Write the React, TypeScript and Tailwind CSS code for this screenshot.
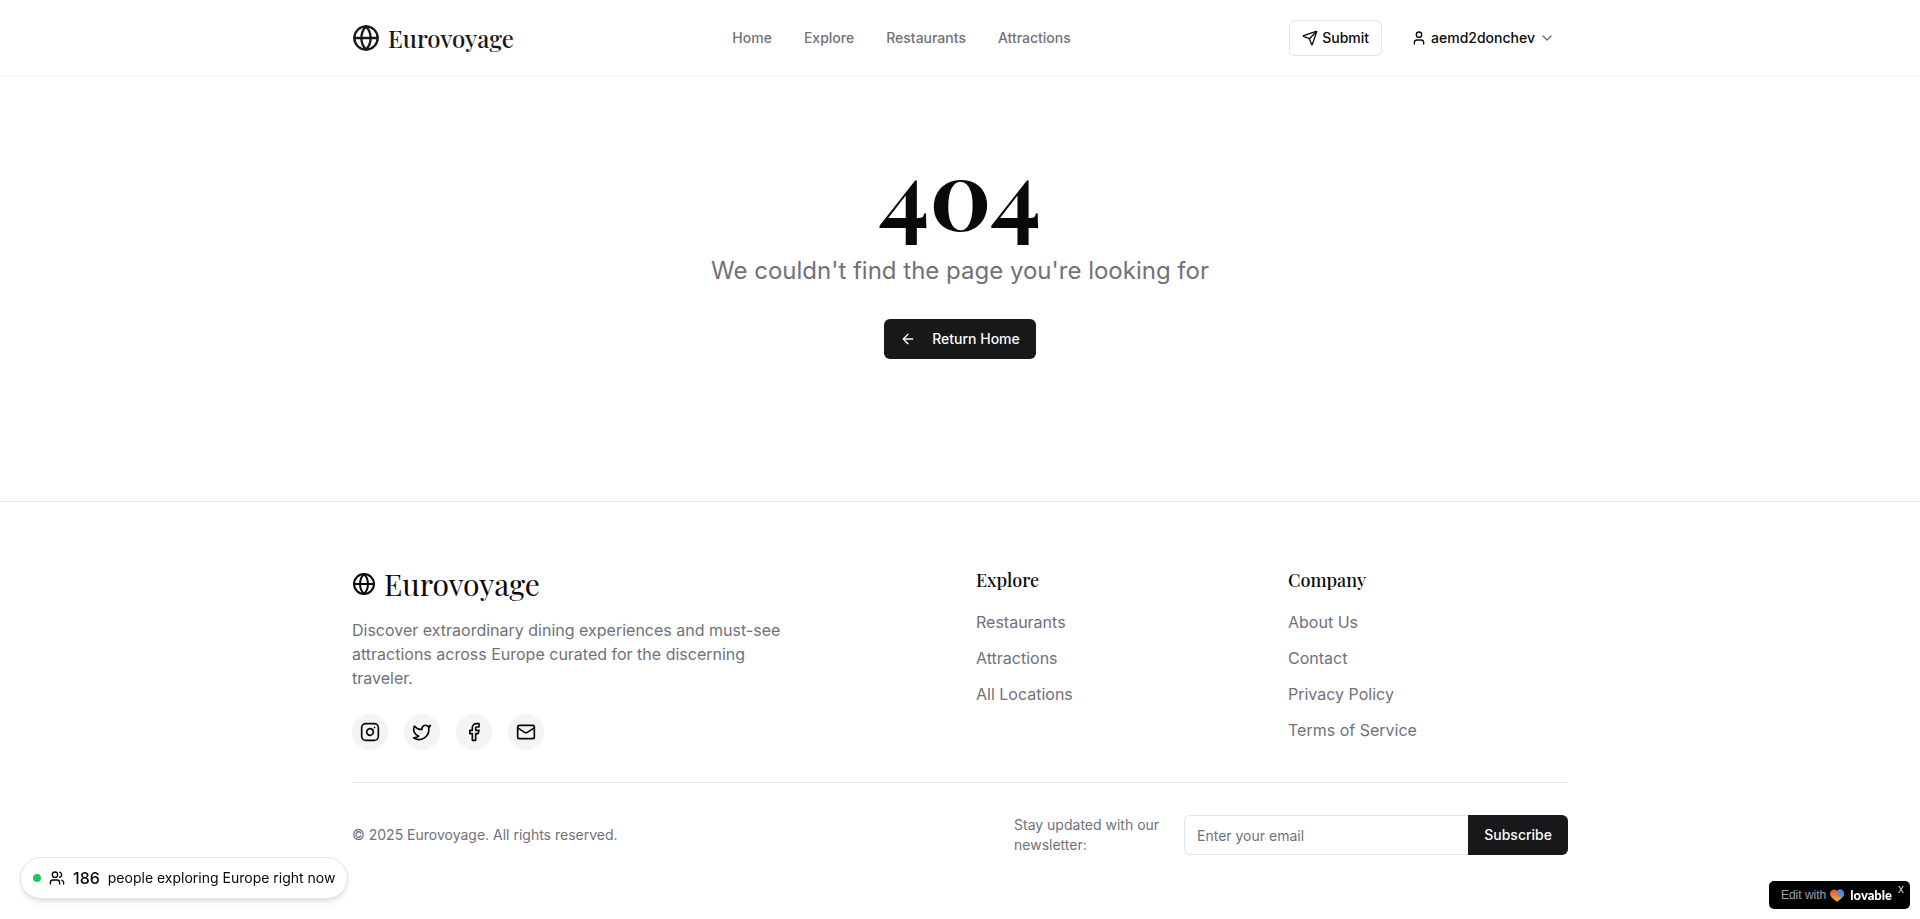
import React from 'react';
import {
  ArrowLeft,
  ChevronDown,
  Facebook,
  Globe,
  Instagram,
  Mail,
  Send,
  Twitter,
  User,
  Users,
} from 'lucide-react';

const serif = "font-['Playfair_Display','Liberation_Serif',serif]";

const navLinks = ['Home', 'Explore', 'Restaurants', 'Attractions'];

const footerColumns = [
  { title: 'Explore', links: ['Restaurants', 'Attractions', 'All Locations'] },
  { title: 'Company', links: ['About Us', 'Contact', 'Privacy Policy', 'Terms of Service'] },
];

const socials = [
  { name: 'Instagram', Icon: Instagram },
  { name: 'Twitter', Icon: Twitter },
  { name: 'Facebook', Icon: Facebook },
  { name: 'Email', Icon: Mail },
];

function Header() {
  return (
    <header className="border-b border-[#f4f4f5]">
      <div className="mx-auto flex h-19 max-w-7xl items-center justify-between px-8">
        <a href="#" className="flex items-center gap-2 text-[#18181b]">
          <Globe className="size-7" />
          <span className={`text-2xl font-medium ${serif}`}>Eurovoyage</span>
        </a>
        <nav className="flex items-center gap-8">
          {navLinks.map((label) => (
            <a key={label} href="#" className="text-sm font-medium text-[#71717a]">
              {label}
            </a>
          ))}
        </nav>
        <div className="flex items-center gap-4">
          <button className="flex h-9 items-center gap-1 rounded-md border border-[#e4e4e7] px-3 text-sm font-medium">
            <Send className="size-4" />
            Submit
          </button>
          <button className="flex h-9 items-center gap-1 border border-transparent px-3 text-sm font-medium">
            <User className="size-4" />
            aemd2donchev
            <ChevronDown className="size-4 opacity-60" />
          </button>
        </div>
      </div>
    </header>
  );
}

function NotFound() {
  return (
    <main className="flex flex-col items-center px-8 pt-[66px] pb-[142px] text-center">
      <h1 className={`mb-4 text-8xl font-bold ${serif}`}>404</h1>
      <p className="text-2xl text-[#71717a]">We couldn't find the page you're looking for</p>
      <a
        href="#"
        className="mt-8 flex h-10 items-center gap-4 rounded-md bg-[#18181b] px-4 text-sm font-medium text-[#fafafa]"
      >
        <ArrowLeft className="size-4" />
        Return Home
      </a>
    </main>
  );
}

function Footer() {
  return (
    <footer className="border-t border-[#e4e4e7]">
      <div className="mx-auto max-w-7xl px-8 py-16">
        <div className="grid grid-cols-4 gap-8">
          <div className="col-span-2">
            <a href="#" className="flex items-center gap-2 text-[#09090b]">
              <Globe className="size-6" />
              <span className={`text-3xl ${serif}`}>Eurovoyage</span>
            </a>
            <p className="mt-4 max-w-md text-[#71717a]">
              Discover extraordinary dining experiences and must-see attractions across Europe
              curated for the discerning traveler.
            </p>
            <div className="mt-6 flex gap-4">
              {socials.map(({ name, Icon }) => (
                <a
                  key={name}
                  href="#"
                  aria-label={name}
                  className="flex size-9 items-center justify-center rounded-full bg-[#f4f4f5]"
                >
                  <Icon className="size-5" />
                </a>
              ))}
            </div>
          </div>
          {footerColumns.map(({ title, links }) => (
            <div key={title}>
              <h2 className={`text-lg font-medium ${serif}`}>{title}</h2>
              <ul className="mt-4 space-y-3">
                {links.map((label) => (
                  <li key={label}>
                    <a href="#" className="text-[#71717a]">
                      {label}
                    </a>
                  </li>
                ))}
              </ul>
            </div>
          ))}
        </div>
        <div className="mt-8 flex items-center justify-between border-t border-[#e4e4e7] pt-8 text-sm">
          <p className="text-[#71717a]">© 2025 Eurovoyage. All rights reserved.</p>
          <div className="flex items-center gap-4">
            <label htmlFor="email" className="w-[154px] text-[#71717a]">
              Stay updated with our newsletter:
            </label>
            <form className="flex h-10 w-96" onSubmit={(e) => e.preventDefault()}>
              <input
                id="email"
                type="email"
                placeholder="Enter your email"
                className="min-w-0 flex-1 rounded-l-md border border-r-0 border-[#e4e4e7] px-3 pt-2.5 pb-2 placeholder:text-[#71717a]"
              />
              <button className="rounded-r-md bg-[#18181b] px-4 font-medium text-[#fafafa]">
                Subscribe
              </button>
            </form>
          </div>
        </div>
      </div>
    </footer>
  );
}

function VisitorCount() {
  return (
    <div className="fixed bottom-5 left-5 flex items-center gap-2 rounded-full border border-[#e4e4e7] bg-white px-3 py-2 shadow-md">
      <span className="size-2 rounded-full bg-[#22c55e]" />
      <Users className="size-4" />
      <span className="font-medium">186</span>
      <span className="text-sm">people exploring Europe right now</span>
    </div>
  );
}

const heartPath =
  'M4 .5C5.3 .5 6.4 1.2 7 2.2 7.6 1.2 8.7 .5 10 .5c2.2 0 4 1.8 4 4.1C14 8 10 10.8 7 12.8 4 10.8 0 8 0 4.6 0 2.3 1.8 .5 4 .5Z';

function LovableBadge() {
  return (
    <div className="fixed right-2.5 bottom-2.5 flex h-7 items-center rounded-[5px] bg-black pr-1.5 pl-3 text-white">
      <a href="#" className="flex items-center gap-1">
        <span className="font-['Liberation_Sans',sans-serif] text-xs text-[#a1a1aa]">Edit with</span>
        <svg viewBox="0 0 14 13" className="h-[13px] w-3.5" aria-hidden="true">
          <defs>
            <linearGradient id="heart-warm" x1="0.1" y1="0.1" x2="0.5" y2="1">
              <stop offset="0" stopColor="#f0452d" />
              <stop offset="0.4" stopColor="#f4813f" />
              <stop offset="1" stopColor="#fdb022" />
            </linearGradient>
            <radialGradient id="heart-blue" cx="0.9" cy="0.2" r="0.65">
              <stop offset="0" stopColor="#2b8bea" />
              <stop offset="0.55" stopColor="#4d8fc4" stopOpacity="0.85" />
              <stop offset="1" stopColor="#a08a90" stopOpacity="0" />
            </radialGradient>
          </defs>
          <path d={heartPath} fill="url(#heart-warm)" />
          <path d={heartPath} fill="url(#heart-blue)" />
        </svg>
        <span className="ml-0.5 font-['Lato',sans-serif] text-[13px] leading-4 font-black">
          lovable
        </span>
      </a>
      <button
        aria-label="Close"
        className="ml-1.5 self-start pt-0.5 font-['Liberation_Sans',sans-serif] text-xs leading-3 text-[#d4d4d8]"
      >
        x
      </button>
    </div>
  );
}

export default function App() {
  return (
    <div className="min-h-screen bg-white font-['Inter',sans-serif] text-[#09090b]">
      <Header />
      <NotFound />
      <Footer />
      <VisitorCount />
      <LovableBadge />
    </div>
  );
}
